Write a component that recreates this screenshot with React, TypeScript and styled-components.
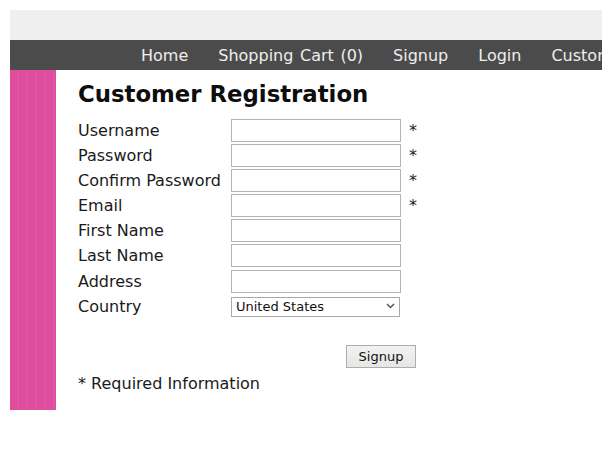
import React from "react";
import styled, { createGlobalStyle } from "styled-components";

const Global = createGlobalStyle`
  *, *::before, *::after { box-sizing: border-box; }
  html, body { margin: 0; padding: 0; background: #ffffff; }
  body { font-family: "DejaVu Sans", Verdana, sans-serif; color: #161616; }
`;

const Page = styled.div`
  margin: 10px 10px 0 10px;
  width: 592px;
  overflow: hidden;
`;

const TopBar = styled.div`
  width: 100%;
  height: 30px;
  background: #efefef;
`;

const Nav = styled.nav`
  width: 100%;
  height: 30px;
  background: #4b4b4b;
  display: flex;
  align-items: center;
  gap: 30px;
  padding-left: 131px;
  overflow: hidden;
  white-space: nowrap;
`;

const NavLink = styled.a`
  color: #eeeeee;
  font-size: 16px;
  word-spacing: 1.5px;
  text-decoration: none;
  flex: none;
`;

const Main = styled.div`
  display: flex;
  height: 340px;
`;

const Sidebar = styled.div`
  width: 46px;
  flex: none;
  background: repeating-linear-gradient(
    90deg,
    #df4d9f 0px,
    #df4d9f 7px,
    #e153a3 7px,
    #e153a3 9px
  );
`;

const Content = styled.div`
  padding: 11px 0 0 22px;
`;

const Title = styled.h1`
  margin: 0 0 12px 0;
  font-size: 22.8px;
  font-weight: bold;
  color: #0d0d0d;
`;

const Form = styled.div`
  display: grid;
  grid-template-columns: 153px 170px auto;
  grid-auto-rows: 22px;
  row-gap: 3.2px;
  align-items: center;
`;

const Label = styled.label`
  font-size: 16px;
  white-space: nowrap;
  color: #1a1a1a;
`;

const TextInput = styled.input`
  width: 170px;
  height: 23px;
  border: 1px solid #b4b4b4;
  background: #fff;
  margin: 0;
  padding: 0 3px;
`;

const Required = styled.span`
  font-size: 16px;
  padding-left: 8px;
  color: #222;
`;

const SelectWrap = styled.div`
  position: relative;
  width: 169px;
  height: 20px;
`;

const Select = styled.select`
  appearance: none;
  width: 169px;
  height: 20px;
  border: 1px solid #a9a9a9;
  background: #fff;
  font-family: "DejaVu Sans", Verdana, sans-serif;
  font-size: 13px;
  color: #111;
  padding: 0 0 0 4px;
  margin: 0;
`;

const Chevron = styled.svg`
  position: absolute;
  right: 5px;
  top: 7px;
  pointer-events: none;
`;

const ButtonRow = styled.div`
  display: flex;
  padding: 28px 0 0 268px;
`;

const Button = styled.button`
  width: 70px;
  height: 23px;
  border: 1px solid #adadad;
  background: linear-gradient(#f2f2f2, #e6e6e6);
  font-family: "DejaVu Sans", Verdana, sans-serif;
  font-size: 13px;
  color: #111;
  padding: 0;
`;

const Note = styled.p`
  margin: 6px 0 0 0;
  font-size: 16px;
  color: #1a1a1a;
`;

const fields: { label: string; required: boolean }[] = [
  { label: "Username", required: true },
  { label: "Password", required: true },
  { label: "Confirm Password", required: true },
  { label: "Email", required: true },
  { label: "First Name", required: false },
  { label: "Last Name", required: false },
  { label: "Address", required: false },
];

export default function App() {
  return (
    <>
      <Global />
      <Page>
        <TopBar />
        <Nav>
          <NavLink>Home</NavLink>
          <NavLink>Shopping Cart (0)</NavLink>
          <NavLink>Signup</NavLink>
          <NavLink>Login</NavLink>
          <NavLink>Customer Service</NavLink>
        </Nav>
        <Main>
          <Sidebar />
          <Content>
            <Title>Customer Registration</Title>
            <Form>
              {fields.map((f) => (
                <React.Fragment key={f.label}>
                  <Label>{f.label}</Label>
                  <TextInput type={f.label.includes("Password") ? "password" : "text"} />
                  <Required>{f.required ? "*" : ""}</Required>
                </React.Fragment>
              ))}
              <Label>Country</Label>
              <SelectWrap>
                <Select defaultValue="us">
                  <option value="us">United States</option>
                </Select>
                <Chevron width="9" height="6" viewBox="0 0 9 6">
                  <path d="M1 1 L4.5 4.5 L8 1" fill="none" stroke="#555" strokeWidth="1.5" />
                </Chevron>
              </SelectWrap>
              <span />
            </Form>
            <ButtonRow>
              <Button>Signup</Button>
            </ButtonRow>
            <Note>* Required Information</Note>
          </Content>
        </Main>
      </Page>
    </>
  );
}
